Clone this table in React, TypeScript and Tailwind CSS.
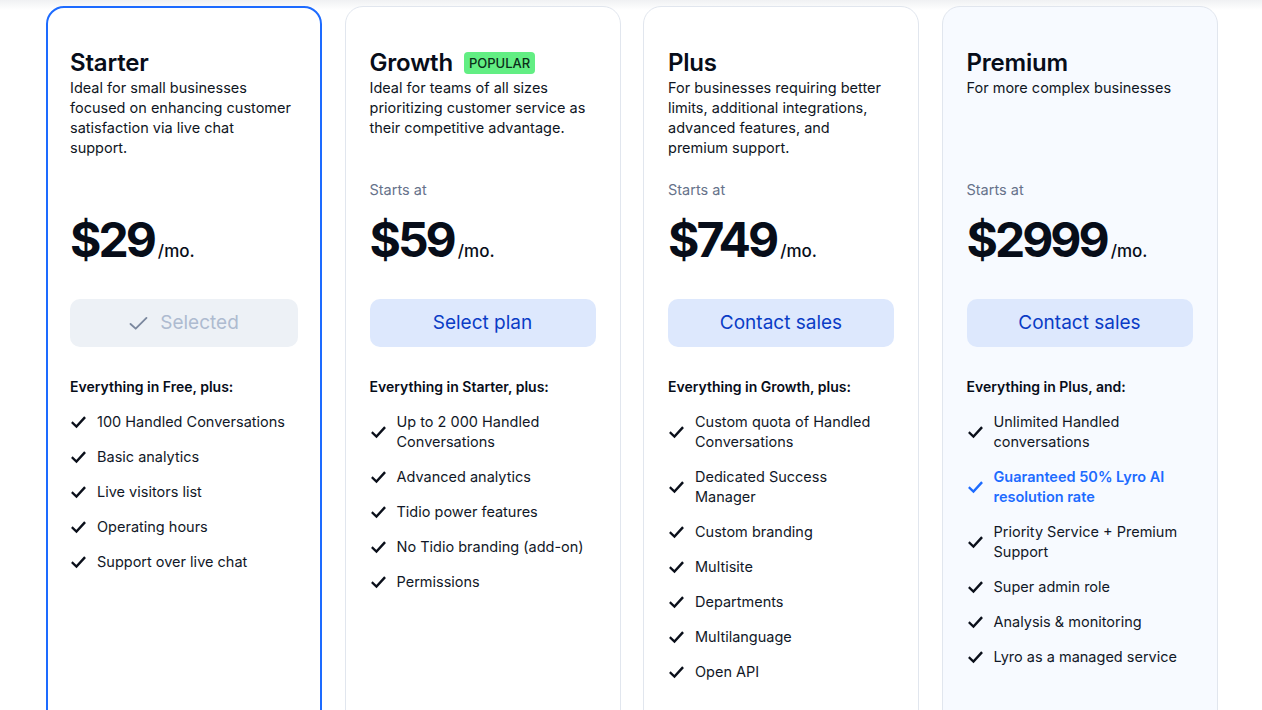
import React from 'react'

type Feature = { text: string; highlight?: boolean }

type Plan = {
  name: string
  badge?: string
  desc: string
  startsAt: boolean
  price: string
  cta: string
  selected?: boolean
  tinted?: boolean
  intro: string
  features: Feature[]
}

const PLANS: Plan[] = [
  {
    name: 'Starter',
    desc: 'Ideal for small businesses focused on enhancing customer satisfaction via live chat support.',
    startsAt: false,
    price: '$29',
    cta: 'Selected',
    selected: true,
    intro: 'Everything in Free, plus:',
    features: [
      { text: '100 Handled Conversations' },
      { text: 'Basic analytics' },
      { text: 'Live visitors list' },
      { text: 'Operating hours' },
      { text: 'Support over live chat' },
    ],
  },
  {
    name: 'Growth',
    badge: 'POPULAR',
    desc: 'Ideal for teams of all sizes prioritizing customer service as their competitive advantage.',
    startsAt: true,
    price: '$59',
    cta: 'Select plan',
    intro: 'Everything in Starter, plus:',
    features: [
      { text: 'Up to 2 000 Handled Conversations' },
      { text: 'Advanced analytics' },
      { text: 'Tidio power features' },
      { text: 'No Tidio branding (add-on)' },
      { text: 'Permissions' },
    ],
  },
  {
    name: 'Plus',
    desc: 'For businesses requiring better limits, additional integrations, advanced features, and premium support.',
    startsAt: true,
    price: '$749',
    cta: 'Contact sales',
    intro: 'Everything in Growth, plus:',
    features: [
      { text: 'Custom quota of Handled Conversations' },
      { text: 'Dedicated Success Manager' },
      { text: 'Custom branding' },
      { text: 'Multisite' },
      { text: 'Departments' },
      { text: 'Multilanguage' },
      { text: 'Open API' },
    ],
  },
  {
    name: 'Premium',
    desc: 'For more complex businesses',
    startsAt: true,
    price: '$2999',
    cta: 'Contact sales',
    tinted: true,
    intro: 'Everything in Plus, and:',
    features: [
      { text: 'Unlimited Handled conversations' },
      { text: 'Guaranteed 50% Lyro AI resolution rate', highlight: true },
      { text: 'Priority Service + Premium Support' },
      { text: 'Super admin role' },
      { text: 'Analysis & monitoring' },
      { text: 'Lyro as a managed service' },
    ],
  },
]

function Check({ className = '' }: { className?: string }) {
  return (
    <svg viewBox="0 0 16 14" className={`w-[15px] h-[13px] ${className}`} fill="none">
      <path d="M1.8 7.6 L5.8 11.4 L14.2 2.2" stroke="currentColor" strokeWidth="2.6" strokeLinecap="square" strokeLinejoin="miter" />
    </svg>
  )
}

function PlanCard({ plan }: { plan: Plan }) {
  const border = plan.selected
    ? 'border-2 border-[#1d6bff] pt-[40px] px-[22px]'
    : 'border border-[#e1e6ee] pt-[41px] px-6'
  return (
    <div className={`w-[276px] h-[760px] shrink-0 rounded-[18px] flex flex-col ${border} ${plan.tinted ? 'bg-[#f7faff]' : 'bg-white'}`}>
      <div className="h-[30px] flex items-center gap-[11px]">
        <h2 className="text-[24px] leading-[30px] font-semibold text-[#070d19] tracking-[-0.2px]">{plan.name}</h2>
        {plan.badge && (
          <span className="bg-[#62ee83] text-[#0b2e1a] text-[13px] leading-[22px] px-[5px] rounded-[4px] font-medium">{plan.badge}</span>
        )}
      </div>
      <p className="h-[80px] text-[14.5px] leading-5 text-[#0f1623] pr-1">{plan.desc}</p>
      <p className={`mt-[22px] text-[14.5px] leading-5 text-[#66728a] ${plan.startsAt ? '' : 'invisible'}`}>Starts at</p>
      <div className="mt-[14px] flex items-baseline gap-[4px] text-[#070d19]">
        <span className="text-[48px] leading-[52px] font-bold tracking-[-3px]">{plan.price}</span>
        <span className="text-[17px] font-medium">/mo.</span>
      </div>
      {plan.selected ? (
        <div className="mt-[33px] h-12 rounded-[10px] bg-[#edf1f6] flex items-center justify-center gap-3 text-[19px] text-[#aebbd0]">
          <svg viewBox="0 0 20 16" className="w-[19px] h-[15px] text-[#7b889e]" fill="none">
            <path d="M1.5 8.5 L7 13.5 L18.5 2" stroke="currentColor" strokeWidth="2" strokeLinecap="round" strokeLinejoin="round" />
          </svg>
          <span>{plan.cta}</span>
        </div>
      ) : (
        <button className="mt-[33px] h-12 rounded-[10px] bg-[#dde8fd] text-[19px] text-[#0a3cc6]">{plan.cta}</button>
      )}
      <p className="mt-[30px] text-[14px] leading-5 font-semibold text-[#070d19]">{plan.intro}</p>
      <ul className="mt-[15px] flex flex-col gap-[15px]">
        {plan.features.map(f => (
          <li key={f.text} className="flex items-center pr-2">
            <span className={`w-[27px] shrink-0 flex ${f.highlight ? 'text-[#1d6bff]' : 'text-[#0a0f1a]'}`}>
              <Check className="ml-[1px]" />
            </span>
            <span className={`text-[14.5px] leading-5 ${f.highlight ? 'text-[#1d6bff] font-semibold' : 'text-[#111827]'}`}>{f.text}</span>
          </li>
        ))}
      </ul>
    </div>
  )
}

export default function App() {
  return (
    <div className="h-[710px] overflow-hidden bg-[linear-gradient(to_bottom,#f0f1f3,#ffffff_10px)] font-['Inter',sans-serif]">
      <div className="pt-[6px] pl-[46px] flex gap-[22.5px]">
        {PLANS.map(p => <PlanCard key={p.name} plan={p} />)}
      </div>
    </div>
  )
}
